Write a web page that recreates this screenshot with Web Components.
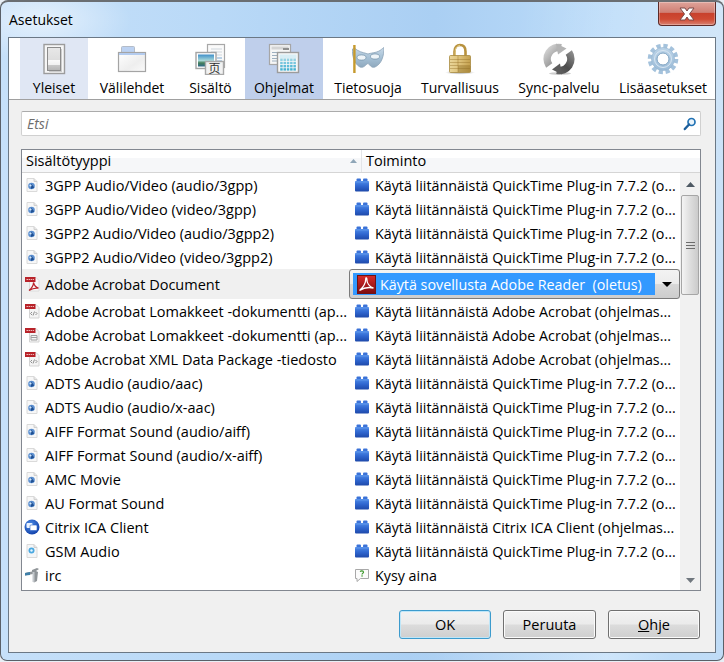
<!DOCTYPE html>
<html>
<head>
<meta charset="utf-8">
<title>Asetukset</title>
<style>
  html, body { margin: 0; padding: 0; background: #e8eef5; }
  body { font-family: "Open Sans", "Noto Sans", sans-serif; font-size: 14px; color: #000; }
</style>
</head>
<body>
<win-dialog>
  <span slot="title">Asetukset</span>
  <pref-toolbar slot="toolbar">
    <pref-tab icon="general" w="68" state="hover">Yleiset</pref-tab>
    <pref-tab icon="tabs" w="88">Välilehdet</pref-tab>
    <pref-tab icon="content" w="69">Sisältö</pref-tab>
    <pref-tab icon="apps" w="78" state="active">Ohjelmat</pref-tab>
    <pref-tab icon="privacy" w="90">Tietosuoja</pref-tab>
    <pref-tab icon="security" w="94">Turvallisuus</pref-tab>
    <pref-tab icon="sync" w="104">Sync-palvelu</pref-tab>
    <pref-tab icon="advanced" w="104">Lisäasetukset</pref-tab>
  </pref-toolbar>
  <search-box placeholder="Etsi"></search-box>
  <handler-tree id="tree"></handler-tree>
  <div slot="buttons" style="display:contents">
    <win-button default w="92">OK</win-button>
    <win-button w="93">Peruuta</win-button>
    <win-button w="92"><u>O</u>hje</win-button>
  </div>
</win-dialog>

<script>
// all the little pictures live here, 16px ones and 32px ones
const ICONS = {
  general: `<svg width="32" height="32" viewBox="0 0 32 32">
    <defs><linearGradient id="a" x1="0" y1="0" x2="0" y2="1"><stop offset="0" stop-color="#e8e8e8"/><stop offset=".53" stop-color="#dedede"/><stop offset=".54" stop-color="#fafafa"/><stop offset=".76" stop-color="#f0f0f0"/><stop offset=".77" stop-color="#c8c8c8"/><stop offset="1" stop-color="#b4b4b4"/></linearGradient></defs>
    <rect x="6" y="1.5" width="20.5" height="29" fill="#f6f6f6" stroke="#9c9c9c" stroke-width="1.4"/>
    <rect x="11" y="6" width="13" height="23" fill="#bbb" opacity=".7"/>
    <rect x="9.5" y="4.5" width="13" height="23" fill="url(#a)" stroke="#8c8c8c"/>
  </svg>`,
  tabs: `<svg width="32" height="32" viewBox="0 0 32 32">
    <defs><linearGradient id="a" x1="0" y1="0" x2="1" y2="1"><stop offset="0" stop-color="#fff"/><stop offset=".6" stop-color="#eee"/><stop offset="1" stop-color="#fafafa"/></linearGradient></defs>
    <path d="M5.5 9.5V4.5q0-1 1-1h11q1 0 1 1v5" fill="#bcd2f2" stroke="#b4bcc8"/>
    <rect x="2.5" y="9.5" width="27" height="19" fill="url(#a)" stroke="#a4a4a4" stroke-width="1.2"/>
    <rect x="3" y="10" width="26" height="2" fill="#b4ccef"/>
  </svg>`,
  content: `<svg width="32" height="32" viewBox="0 0 32 32">
    <defs><linearGradient id="a" x1="0" y1="0" x2="0" y2="1"><stop offset="0" stop-color="#3f8fc9"/><stop offset=".5" stop-color="#a8d8d8"/><stop offset=".7" stop-color="#46805a"/><stop offset="1" stop-color="#2f6a8a"/></linearGradient></defs>
    <rect x="12.5" y="1.5" width="17" height="23" fill="#fafafa" stroke="#a8a8a8" stroke-width="1.2"/>
    <path d="M16 6h11M16 9h11M21 12h6" stroke="#cfd6dc" fill="none"/>
    <path d="M22 15h5M22 18h5" stroke="#7aa8d0" fill="none"/>
    <rect x="1" y="9.5" width="20" height="16" fill="#fff" stroke="#a4a4a4" stroke-width="1.4"/>
    <rect x="3" y="11.5" width="16" height="12" fill="url(#a)"/>
    <rect x="10.5" y="18.5" width="18" height="13" fill="#f2f2f2" stroke="#a8a8a8" stroke-width="1.4"/>
    <text x="19.5" y="29.5" text-anchor="middle" font-size="12" font-family="Noto Sans CJK SC, sans-serif" fill="#333">页</text>
  </svg>`,
  apps: `<svg width="32" height="32" viewBox="0 0 32 32">
    <rect x="1.5" y="1.5" width="21" height="20" fill="#f6f6f6" stroke="#a6a6a6" stroke-width="1.2"/>
    <rect x="3.5" y="3.5" width="17" height="3" fill="#d4d4d4"/>
    <rect x="15" y="5" width="6" height="2" fill="#8e8e8e"/>
    <path d="M4 9.5h5M4 12.5h5M4 15.5h5M4 18h5" stroke="#9eb0c0" fill="none"/>
    <rect x="9.5" y="9.5" width="21" height="20" fill="#f8f8f8" stroke="#9c9c9c" stroke-width="1.4"/>
    <rect x="11.5" y="11.5" width="17" height="4" fill="#d8eef6"/>
    <g fill="#3fb0d2">${[0,1,2,3].map(r=>[0,1,2,3,4].map(c=>`<rect x="${12.2+c*3.3}" y="${15.6+r*3.2}" width="2.5" height="2.4" opacity="${.55+r*.14}"/>`).join('')).join('')}</g>
  </svg>`,
  privacy: `<svg width="32" height="32" viewBox="0 0 32 32">
    <defs><linearGradient id="a" x1="0" y1="0" x2="0" y2="1"><stop offset="0" stop-color="#c8d9e8"/><stop offset=".55" stop-color="#a4bfd4"/><stop offset="1" stop-color="#8fa9be"/></linearGradient></defs>
    <path d="M.5 6C2 5 3 5 5 7 10 10 14 10 16 11 18 10 24 10 28 7.5 30 6 31 5 32 4.5 32 12 30 21 23 24 19 25.5 17.5 21 16 20.5 14 21 12 25.5 8 24 2 21 0 12 .5 6Z" fill="url(#a)" stroke="#8aa2b6" stroke-width=".8"/>
    <ellipse cx="9.5" cy="14.5" rx="4.5" ry="2.6" fill="#eef4f8" stroke="#7390a8" stroke-width=".7"/>
    <ellipse cx="23" cy="13.5" rx="4.5" ry="2.6" fill="#eef4f8" stroke="#7390a8" stroke-width=".7"/>
    <rect x="1.2" y="2" width="2.4" height="28" fill="#c69a2e"/>
  </svg>`,
  security: `<svg width="32" height="32" viewBox="0 0 32 32">
    <defs><linearGradient id="a" x1="0" y1="0" x2="1" y2="0"><stop offset="0" stop-color="#ead69a"/><stop offset=".5" stop-color="#dcc078"/><stop offset="1" stop-color="#c4a04e"/></linearGradient>
    <radialGradient id="s"><stop offset="0" stop-color="#666" stop-opacity=".6"/><stop offset="1" stop-color="#666" stop-opacity="0"/></radialGradient></defs>
    <ellipse cx="16" cy="29.5" rx="15" ry="2.2" fill="url(#s)"/>
    <path d="M10.5 13V8.5C10.500 4 13 2 16 2s5.500 2 5.500 6.500V13" fill="none" stroke="#b8923e" stroke-width="2.6"/>
    <path d="M11.200 12V8.500C11.200 4.500 13.500 2.600 16 2.600" fill="none" stroke="#e6d08e" stroke-width="1"/>
    <rect x="5.500" y="12.500" width="21" height="17" rx="1" fill="url(#a)" stroke="#a88a40" stroke-width=".8"/>
    <path d="M6 16.500h20M6 19.500h20M6 22.500h20M6 25.500h20M14 13v16" stroke="#94702a" stroke-width=".7" fill="none" opacity=".6"/>
    <rect x="14" y="23" width="12.500" height="6" fill="#8a6820" opacity=".4"/>
  </svg>`,
  sync: `<svg width="32" height="32" viewBox="0 0 32 32">
    <defs><linearGradient id="a" gradientUnits="userSpaceOnUse" x1="2" y1="2" x2="24" y2="22"><stop offset="0" stop-color="#e2e2e2"/><stop offset=".6" stop-color="#9a9a9a"/><stop offset="1" stop-color="#707070"/></linearGradient>
    <linearGradient id="b" gradientUnits="userSpaceOnUse" x1="28" y1="8" x2="8" y2="30"><stop offset="0" stop-color="#8c8c8c"/><stop offset=".5" stop-color="#4c4c4c"/><stop offset="1" stop-color="#6e6e6e"/></linearGradient></defs>
    <ellipse cx="17" cy="30.500" rx="11" ry="1.300" fill="#999" opacity=".5"/>
    <path d="M25.800 9.500A11.500 11.500 0 0 1 14 27.300" fill="none" stroke="url(#b)" stroke-width="7.500"/>
    <path d="M19 31.500L9 26.500 17 20.500Z" fill="#5c5c5c"/>
    <path d="M6.200 22.500A11.500 11.500 0 0 1 18 4.700" fill="none" stroke="url(#a)" stroke-width="7.500"/>
    <path d="M13 .5L23.500 5.500 15 11.500Z" fill="#b4b4b4"/>
  </svg>`,
  advanced: `<svg width="32" height="32" viewBox="0 0 32 32">
    <defs><linearGradient id="a" x1="0" y1="0" x2="0" y2="1"><stop offset="0" stop-color="#bcd4e8"/><stop offset="1" stop-color="#9cbcd8"/></linearGradient></defs>
    <circle cx="16" cy="16" r="13.300" fill="none" stroke="#a4c2dc" stroke-width="4" stroke-dasharray="4.200 2.760"/>
    <circle cx="16" cy="16" r="11.500" fill="url(#a)" stroke="#8fb0cc" stroke-width=".6"/>
    <circle cx="16" cy="16" r="6" fill="#fff" stroke="#80a4c2" stroke-width="1"/>
    <circle cx="16" cy="16" r="8.500" fill="none" stroke="#d8e6f2" stroke-width="1"/>
  </svg>`,
  doc: `<svg width="16" height="16" viewBox="0 0 16 16">
    <path d="M3 1.500h7l3 3v10H3Z" fill="#f7f7f7" stroke="#dadada"/>
    <path d="M10 1.500v3h3" fill="#e6e6e6" stroke="#d0d0d0"/>
    <circle cx="7.500" cy="9" r="3.300" fill="#5b8fd0"/><path d="M7 6.500l3.300 4-3.300 1.500Z" fill="#1f4f92"/><circle cx="6.500" cy="8.500" r="1.100" fill="#d4e6f8"/>
  </svg>`,
  gsm: `<svg width="16" height="16" viewBox="0 0 16 16">
    <path d="M3 1.500h7l3 3v10H3Z" fill="#f4f6f8" stroke="#dadada"/>
    <path d="M10 1.500v3h3" fill="#e6e6e6" stroke="#d0d0d0"/>
    <circle cx="7.500" cy="7.500" r="3" fill="#4aa8e0"/><circle cx="7.500" cy="7.500" r="1.200" fill="#e8f6ff"/>
  </svg>`,
  pdf: `<svg width="16" height="16" viewBox="0 0 16 16">
    <path d="M5.500 1.500h6.500l3 3v10.500H5.500Z" fill="#f8f8f8" stroke="#dcdcdc"/>
    <rect x="1" y="1" width="10.500" height="5" fill="#b8232a"/><path d="M2.500 3.500h7.500" stroke="#f4c8c8" stroke-width=".9" stroke-dasharray="1.500 .6"/>
    <path d="M5 14.500C8 12 9.500 9 9.500 6.500c.8 3 2.500 5 5 5.700-3-.4-6.800.6-9.500 2.300Z" fill="none" stroke="#b8232a" stroke-width="1.200"/>
  </svg>`,
  pdfxml: `<svg width="16" height="16" viewBox="0 0 16 16">
    <path d="M5.500 1.500h6.500l3 3v10.500H5.500Z" fill="#f4f4f4" stroke="#d4d4d4"/>
    <rect x="1" y="1" width="10.500" height="5" fill="#b8232a"/><path d="M2.500 3.500h7.500" stroke="#f4c8c8" stroke-width=".9" stroke-dasharray="1.500 .6"/>
    <path d="M8 9l-1.500 1.500L8 12M11.500 9l1.500 1.500L11.500 12M10.500 8.500l-1.500 4" fill="none" stroke="#909090"/>
  </svg>`,
  pdfform: `<svg width="16" height="16" viewBox="0 0 16 16">
    <path d="M5.500 1.500h6.500l3 3v10.500H5.500Z" fill="#f4f4f4" stroke="#d4d4d4"/>
    <rect x="1" y="1" width="10.500" height="5" fill="#b8232a"/><path d="M2.500 3.500h7.500" stroke="#f4c8c8" stroke-width=".9" stroke-dasharray="1.500 .6"/>
    <path d="M7 8.500h6v4.500H7ZM7 10.500h6" fill="none" stroke="#a0a0a0"/>
  </svg>`,
  pdfbig: `<svg width="19" height="19" viewBox="0 0 19 19">
    <defs><linearGradient id="a" x1="0" y1="0" x2="0" y2="1"><stop offset="0" stop-color="#d82a2a"/><stop offset="1" stop-color="#7c0c10"/></linearGradient></defs>
    <rect x=".5" y=".5" width="18" height="18" fill="url(#a)" stroke="#6e1216"/>
    <path d="M2.500 15.500C6 12.500 8.800 7.500 8.800 3.500c0-1 1-1 1 .2 0 4 2.500 8 6.700 9.300-4.500-1-9.500-.5-14 2.500Z" fill="none" stroke="#fff" stroke-width="1.300"/>
  </svg>`,
  lego: `<svg width="16" height="16" viewBox="0 0 16 16">
    <defs><linearGradient id="a" x1="0" y1="0" x2="0" y2="1"><stop offset="0" stop-color="#4d8ae8"/><stop offset=".5" stop-color="#2f66cf"/><stop offset="1" stop-color="#1e49aa"/></linearGradient></defs>
    <rect x="2.500" y="1.500" width="4.500" height="3" rx="1" fill="#3a72d8"/><rect x="9" y="1.500" width="4.500" height="3" rx="1" fill="#3a72d8"/>
    <rect x="1" y="4" width="14" height="10.500" rx="1" fill="url(#a)"/>
    <rect x="1" y="4.500" width="14" height="1" fill="#6a9ff0" opacity=".7"/>
  </svg>`,
  citrix: `<svg width="16" height="16" viewBox="0 0 16 16">
    <defs><radialGradient id="a" cx=".4" cy=".35" r=".7"><stop offset="0" stop-color="#4f8fe8"/><stop offset="1" stop-color="#0f3ea8"/></radialGradient></defs>
    <circle cx="8" cy="8" r="7.500" fill="url(#a)"/>
    <rect x="2.500" y="4" width="6" height="5" rx="1" fill="#eaf2ff"/><rect x="6" y="6" width="7" height="5.500" rx="1" fill="#fff" stroke="#2a62c8" stroke-width=".6"/>
  </svg>`,
  wrench: `<svg width="16" height="16" viewBox="0 0 16 16">
    <path d="M1 6l7-1.500V3l5-2 2 1-3 2 2 1-1 9-3 1.500-1-1V7L1 8.500Z" fill="#8f9498"/>
    <path d="M1 6l5-1v3L1 8.500Z" fill="#3f7fa8"/>
    <path d="M8.500 5h2v10h-2Z" fill="#c4c8cc"/>
  </svg>`,
  ask: `<svg width="16" height="16" viewBox="0 0 16 16">
    <path d="M1.500 2.500h13v9h-8l-3.500 3v-3h-1.500Z" fill="#fbfbfb" stroke="#a8a8a8"/>
    <path d="M6.200 4.800c.5-1.200 3.300-1.200 3.300.4 0 1.200-1.500 1.200-1.500 2.400" fill="none" stroke="#3f9a2e" stroke-width="1.200"/>
    <rect x="7.400" y="8.300" width="1.300" height="1.300" fill="#3f9a2e"/>
  </svg>`
};

class AppIcon extends HTMLElement {
  constructor() {
    super();
    this._root = this.attachShadow({ mode: 'open' });
  }
  connectedCallback() {
    this._root.innerHTML = `<style>:host{display:block;line-height:0}svg{display:block}</style>${ICONS[this.getAttribute('name')] || ''}`;
  }
}
customElements.define('app-icon', AppIcon);

class WinDialog extends HTMLElement {
  constructor() {
    super();
    this.attachShadow({ mode: 'open' }).innerHTML = `<style>
      :host {
        display: block; box-sizing: border-box; width: 724px; height: 661px;
        border: 1px solid #5a6068; border-top: 2px solid #6a6e72; border-radius: 8px 8px 7px 7px;
        padding: 0 7px 7px 7px;
        background:
          radial-gradient(ellipse 90px 40px at 40px 18px, rgba(255,255,255,.55), rgba(255,255,255,0)),
          linear-gradient(100deg, rgba(255,255,255,0) 62%, rgba(255,255,255,.28) 86%, rgba(255,255,255,0) 94%),
          linear-gradient(90deg, #c6e0f9 0%, #b9d9f7 30%, #aacff3 60%, #bcdcf9 85%, #c0dcf6 100%);
        display: flex; flex-direction: column;
      }
      .titlebar { display: flex; justify-content: space-between; height: 35px; flex: none; }
      .title { font-size: 14px; line-height: 20px; padding: 8px 0 0 1px; color: #000; }
      .close {
        width: 58px; height: 24px; box-sizing: border-box; margin-top: 0;
        border: 1px solid #5c2a28; border-top: none; border-radius: 0 0 4px 4px;
        background: linear-gradient(#dfa39a 0%, #cf7f74 45%, #c8412c 50%, #cf4a33 75%, #d98272 100%);
        box-shadow: inset 0 0 0 1px rgba(255,255,255,.28);
        display: flex; align-items: center; justify-content: center;
      }
      .client {
        flex: 1; display: flex; flex-direction: column; min-height: 0;
        border: 1px solid #6b7885; background: #f0f0f0;
      }
      .body { flex: 1; display: flex; flex-direction: column; padding: 11px 14px 0 12px; }
      .buttons { display: flex; justify-content: flex-end; gap: 12px; padding: 19px 1px 0 0; }
    </style>
    <div class="titlebar">
      <div class="title"><slot name="title"></slot></div>
      <div class="close"><svg width="22" height="16" viewBox="0 0 22 16">
        <path d="M4 2h5l2 3 2-3h5l-4.500 6L18 14h-5l-2-3-2 3H4l4.500-6Z" fill="#fff" stroke="#7a4a48" stroke-width="1"/>
      </svg></div>
    </div>
    <div class="client">
      <slot name="toolbar"></slot>
      <div class="body">
        <slot></slot>
        <div class="buttons"><slot name="buttons"></slot></div>
      </div>
    </div>`;
  }
}
customElements.define('win-dialog', WinDialog);

class PrefToolbar extends HTMLElement {
  constructor() {
    super();
    this.attachShadow({ mode: 'open' }).innerHTML = `<style>
      :host { display: flex; height: 61px; padding-left: 11px; background: #fff; border-bottom: 1px solid #a0a0a0; }
    </style><slot></slot>`;
  }
}
customElements.define('pref-toolbar', PrefToolbar);

class PrefTab extends HTMLElement {
  constructor() {
    super();
    this._root = this.attachShadow({ mode: 'open' });
  }
  connectedCallback() {
    this._root.innerHTML = `<style>
      :host { display: flex; flex-direction: column; align-items: center; box-sizing: border-box; flex: none;
        padding-top: 5px; white-space: nowrap; font-size: 14px; line-height: 19px; color: #000; }
      :host([state=hover]) { background: #e0e7f4; }
      :host([state=active]) { background: #bfcfeb; }
      .lab { margin-top: 3px; }
    </style><app-icon name="${this.getAttribute('icon')}"></app-icon><div class="lab"><slot></slot></div>`;
    this.style.width = this.getAttribute('w') + 'px';
  }
}
customElements.define('pref-tab', PrefTab);

class SearchBox extends HTMLElement {
  constructor() {
    super();
    this._root = this.attachShadow({ mode: 'open' });
  }
  connectedCallback() {
    this._root.innerHTML = `<style>
      :host { display: flex; align-items: center; justify-content: space-between; box-sizing: border-box;
        height: 25px; background: #fff; border: 1px solid #d0d0d0; border-top-color: #ababab; border-radius: 2px;
        padding: 0 3px 0 5px; }
      .ph { font-style: italic; font-size: 14px; color: #6d6d6d; }
    </style><span class="ph">${this.getAttribute('placeholder')}</span>
    <svg width="14" height="14" viewBox="0 0 14 14"><circle cx="8.500" cy="5" r="3.500" fill="#eaf4fb" stroke="#2272b4" stroke-width="1.700"/><path d="M6 7.500L1.800 12" stroke="#1c5f9c" stroke-width="2.400" stroke-linecap="round"/></svg>`;
  }
}
customElements.define('search-box', SearchBox);

class HandlerTree extends HTMLElement {
  constructor() {
    super();
    this.attachShadow({ mode: 'open' }).innerHTML = `<style>
      :host { display: block; box-sizing: border-box; height: 442px; margin-top: 13px; background: #fff; border: 1px solid #828790; }
      .head { display: grid; grid-template-columns: 339px 1fr; height: 23px; box-sizing: border-box; font-size: 14.500px;
        border-bottom: 1px solid #d5d5d5; background: linear-gradient(#fff 0 38%, #f6f7f9 38% 100%); line-height: 22px; color: #000; }
      .head div { padding-left: 4px; position: relative; }
      .head div + div { border-left: 1px solid #e3e5e8; }
      .sort { position: absolute; right: 4px; top: 9px; }
      .main { display: flex; height: 417px; }
      .rows { flex: 1; min-width: 0; }
    </style>
    <div class="head"><div>Sisältötyyppi<svg class="sort" width="7" height="4" viewBox="0 0 7 4"><path d="M0 4L3.500 0 7 4Z" fill="#8fa6b8"/></svg></div><div>Toiminto</div></div>
    <div class="main"><div class="rows"><slot></slot></div><tree-scroll></tree-scroll></div>`;
  }
}
customElements.define('handler-tree', HandlerTree);

class TreeScroll extends HTMLElement {
  constructor() {
    super();
    this.attachShadow({ mode: 'open' }).innerHTML = `<style>
      :host { display: flex; flex-direction: column; align-items: center; width: 20px; flex: none; background: #f1f1f1; box-sizing: border-box; height: 417px; }
      .btn { height: 22px; width: 100%; display: flex; align-items: center; justify-content: center; flex: none; }
      .thumb { box-sizing: border-box; width: 18px; height: 100px; flex: none; border: 1px solid #a6a6a6; border-radius: 2px;
        background: linear-gradient(90deg, #f4f4f4, #dedede 50%, #cbcbcb);
        display: flex; align-items: center; justify-content: center; }
      .gap { flex: 1; }
    </style>
    <div class="btn"><svg width="9" height="5" viewBox="0 0 9 5"><path d="M0 5L4.500 0 9 5Z" fill="#4f5a64"/></svg></div>
    <div class="thumb"><svg width="9" height="9" viewBox="0 0 9 9"><path d="M0 1.500h9M0 4.500h9M0 7.500h9" stroke="#6c6c6c" fill="none"/></svg></div>
    <div class="gap"></div>
    <div class="btn" style="height:20px"><svg width="9" height="5" viewBox="0 0 9 5"><path d="M0 0L4.500 5 9 0Z" fill="#70777e"/></svg></div>`;
  }
}
customElements.define('tree-scroll', TreeScroll);

class HandlerRow extends HTMLElement {
  constructor() {
    super();
    this._root = this.attachShadow({ mode: 'open' });
  }
  connectedCallback() {
    const actionIcon = this.getAttribute('action-icon');
    this._root.innerHTML = `<style>
      :host { display: grid; grid-template-columns: 327px 1fr; height: 24px; align-items: center; white-space: nowrap; color: #000; }
      :host([selected]) { height: 30px; background: #f0f0f0; }
      .cell { display: flex; align-items: center; min-width: 0; }
      .type { padding-left: 2px; gap: 5px; font-size: 14.500px; }
      .action { padding-left: 5px; gap: 5px; font-size: 14.300px; }
      :host([selected]) .action { padding: 0; }
    </style>
    <div class="cell type"><app-icon name="${this.getAttribute('icon')}"></app-icon><slot name="type"></slot></div>
    <div class="cell action">${actionIcon ? `<app-icon name="${actionIcon}"></app-icon>` : ''}<slot name="action"></slot></div>`;
  }
}
customElements.define('handler-row', HandlerRow);

class MenuList extends HTMLElement {
  constructor() {
    super();
    this.attachShadow({ mode: 'open' }).innerHTML = `<style>
      :host { display: flex; align-items: center; box-sizing: border-box; width: 331px; height: 30px; padding: 3px 0 3px 3px;
        border: 1px solid #7b7b7b; border-radius: 3px; background: linear-gradient(#f3f3f3, #ececec 48%, #d8d8d8 52%, #cdcdcd); }
      .sel { display: flex; align-items: center; gap: 4px; width: 302px; height: 22px; padding-left: 4px; box-sizing: border-box; background: #3399ff; color: #fff; }
      .arrow { flex: 1; display: flex; justify-content: center; }
    </style>
    <div class="sel"><app-icon name="pdfbig"></app-icon><slot></slot></div>
    <div class="arrow"><svg width="10" height="5" viewBox="0 0 10 5"><path d="M0 0h10L5 5Z" fill="#000"/></svg></div>`;
  }
}
customElements.define('menu-list', MenuList);

class WinButton extends HTMLElement {
  constructor() {
    super();
    this._root = this.attachShadow({ mode: 'open' });
  }
  connectedCallback() {
    this._root.innerHTML = `<style>
      :host { display: flex; align-items: center; justify-content: center; box-sizing: border-box; height: 29px; flex: none;
        border: 1px solid #707070; border-radius: 3px; color: #000; font-size: 14.500px;
        background: linear-gradient(#f2f2f2, #ebebeb 49%, #dcdcdc 51%, #cfcfcf);
        box-shadow: inset 0 0 0 1px #fbfbfb; }
      :host([default]) { border-color: #3c9bcd; box-shadow: inset 0 0 0 1px #bfe6f8; }
    </style><slot></slot>`;
    this.style.width = this.getAttribute('w') + 'px';
  }
}
customElements.define('win-button', WinButton);

// rows of the table
const QT = 'Käytä liitännäistä QuickTime Plug-in 7.7.2 (o...';
const ACRO = 'Käytä liitännäistä Adobe Acrobat (ohjelmas...';
const rows = [
  ['doc', '3GPP Audio/Video (audio/3gpp)', 'lego', QT],
  ['doc', '3GPP Audio/Video (video/3gpp)', 'lego', QT],
  ['doc', '3GPP2 Audio/Video (audio/3gpp2)', 'lego', QT],
  ['doc', '3GPP2 Audio/Video (video/3gpp2)', 'lego', QT],
  ['pdf', 'Adobe Acrobat Document', null, 'Käytä sovellusta Adobe Reader  (oletus)'],
  ['pdfxml', 'Adobe Acrobat Lomakkeet -dokumentti (ap...', 'lego', ACRO],
  ['pdfform', 'Adobe Acrobat Lomakkeet -dokumentti (ap...', 'lego', ACRO],
  ['pdfxml', 'Adobe Acrobat XML Data Package -tiedosto', 'lego', ACRO],
  ['doc', 'ADTS Audio (audio/aac)', 'lego', QT],
  ['doc', 'ADTS Audio (audio/x-aac)', 'lego', QT],
  ['doc', 'AIFF Format Sound (audio/aiff)', 'lego', QT],
  ['doc', 'AIFF Format Sound (audio/x-aiff)', 'lego', QT],
  ['doc', 'AMC Movie', 'lego', QT],
  ['doc', 'AU Format Sound', 'lego', QT],
  ['citrix', 'Citrix ICA Client', 'lego', 'Käytä liitännäistä Citrix ICA Client (ohjelmas...'],
  ['gsm', 'GSM Audio', 'lego', QT],
  ['wrench', 'irc', 'ask', 'Kysy aina']
];
const tree = document.getElementById('tree');
rows.forEach(([icon, type, actionIcon, action]) => {
  const row = document.createElement('handler-row');
  row.setAttribute('icon', icon);
  if (actionIcon) {
    row.setAttribute('action-icon', actionIcon);
    row.innerHTML = `<span slot="type">${type}</span><span slot="action">${action}</span>`;
  } else {
    row.setAttribute('selected', '');
    row.innerHTML = `<span slot="type">${type}</span><menu-list slot="action" style="white-space:pre">${action}</menu-list>`;
  }
  tree.appendChild(row);
});
</script>
</body>
</html>
